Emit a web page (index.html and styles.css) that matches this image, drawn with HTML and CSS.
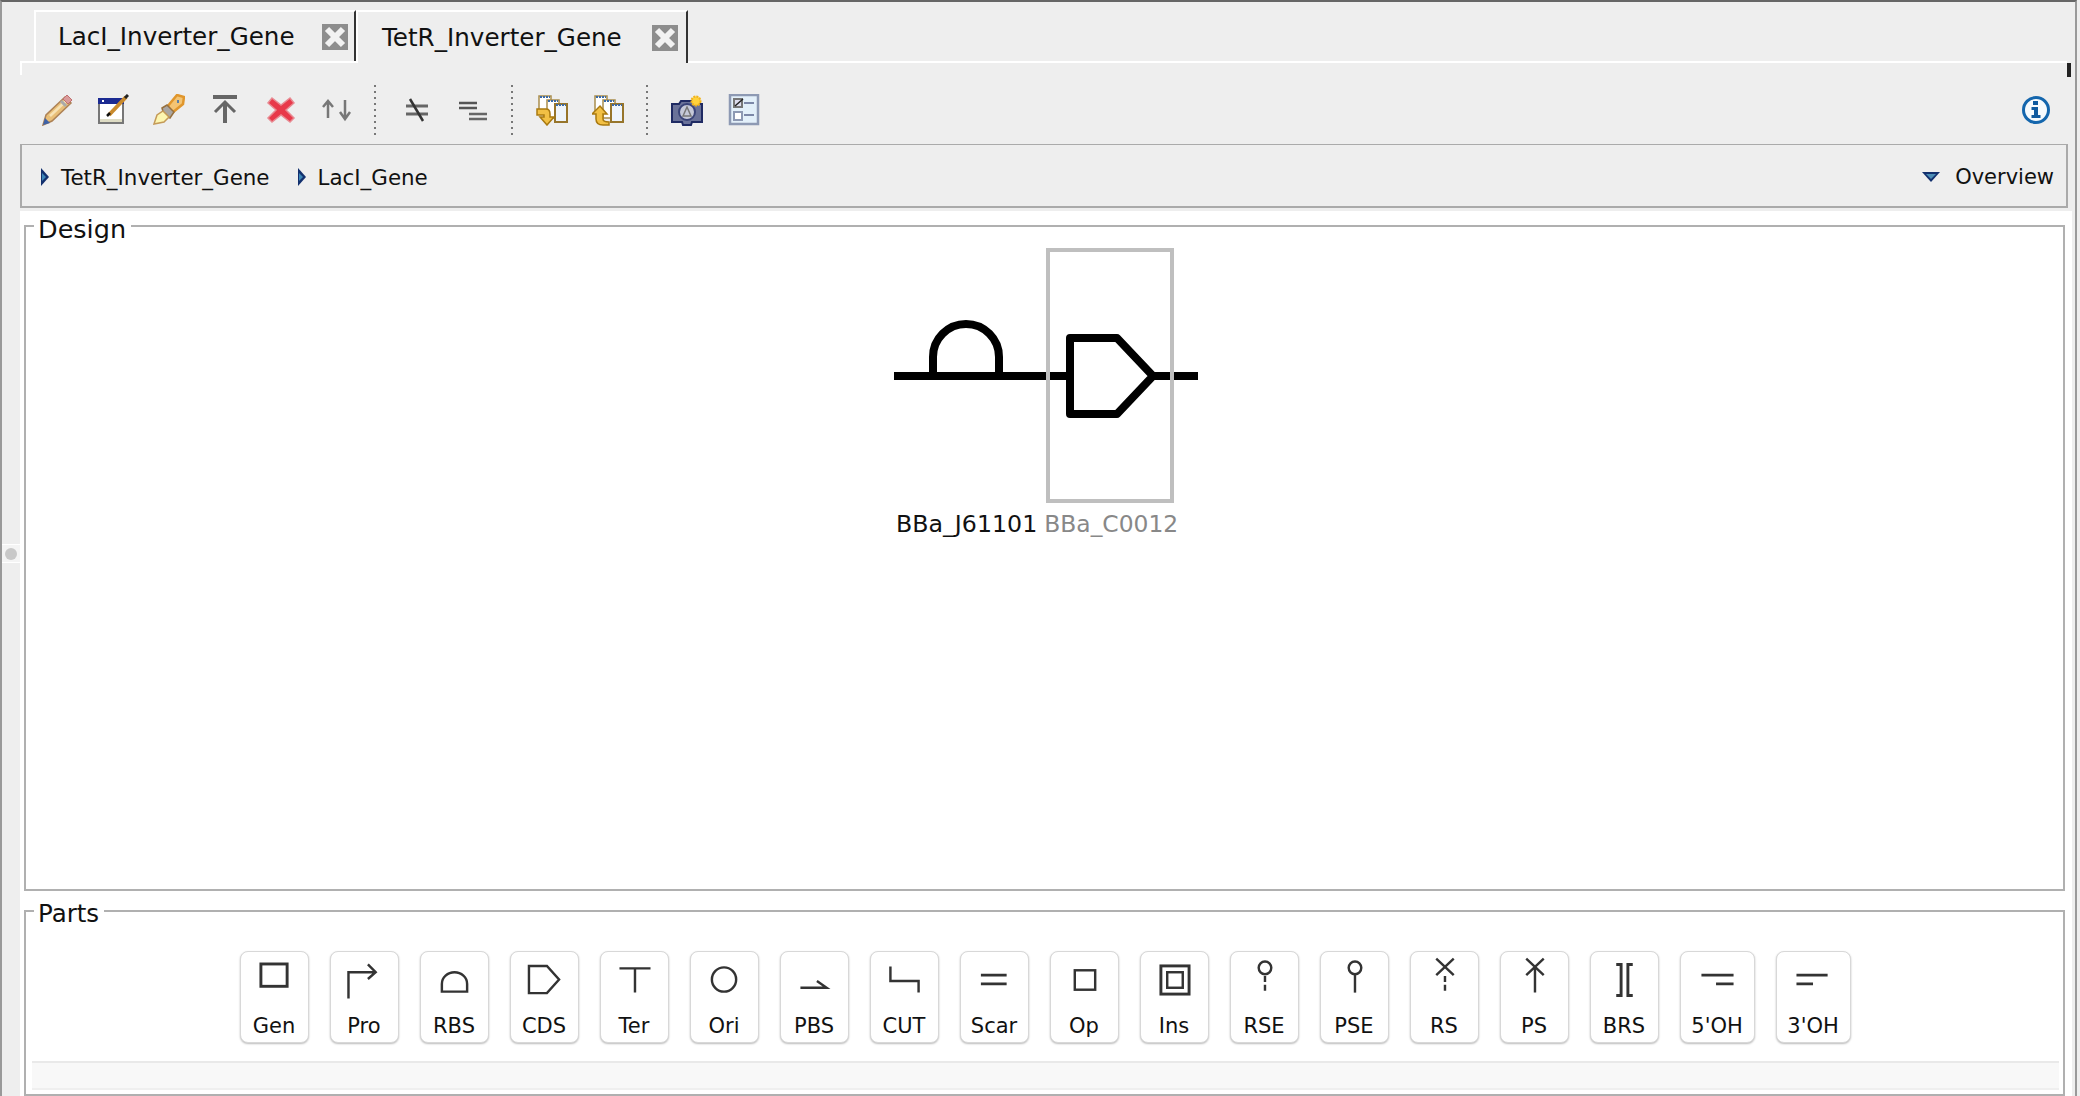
FILE: index.html
```html
<!DOCTYPE html>
<html lang="en">
<head>
  <title>TetR_Inverter_Gene</title>
  <link rel="stylesheet" href="styles.css">
</head>
<body>
  <div class="window">
    <div class="tabs">
      <div class="tab">
        <span class="tab-title">LacI_Inverter_Gene</span>
        <svg class="tab-close" viewBox="0 0 26 26"><rect width="26" height="26" fill="#8d8d8d"/><path d="M5 5L21 21M21 5L5 21" stroke="#f2f2f2" stroke-width="6"/></svg>
      </div>
      <div class="tab tab-active">
        <span class="tab-title">TetR_Inverter_Gene</span>
        <svg class="tab-close" viewBox="0 0 26 26"><rect width="26" height="26" fill="#8d8d8d"/><path d="M5 5L21 21M21 5L5 21" stroke="#f2f2f2" stroke-width="6"/></svg>
      </div>
    </div>

    <div class="editor">
      <div class="toolbar">
        <div class="tool-group">
          <svg class="tool" viewBox="0 0 32 32"><path d="M2 31L5 21L24 3L30 9L11 27Z" fill="#e9bf78" stroke="#ad8256" stroke-width="1.5"/><path d="M9 22L25 7" stroke="#f7e2b4" stroke-width="2.5"/><path d="M22 5L26 1L31 6L27 10Z" fill="#d99a9a" stroke="#c06f6f"/><path d="M20 7L25 12" stroke="#aaa" stroke-width="3"/><path d="M2 31L4 24L9 29Z" fill="#3f63a8"/></svg>
          <svg class="tool" viewBox="0 0 32 32"><rect x="2" y="5" width="24" height="24" fill="#fff" stroke="#777" stroke-width="2"/><rect x="1" y="4" width="26" height="6" fill="#1b2a92"/><rect x="5" y="6" width="2" height="2" fill="#fff"/><rect x="3" y="25" width="22" height="3" fill="#dedcc4"/><path d="M12 21L29 3" stroke="#c98a2c" stroke-width="4"/><path d="M10 22L13 19" stroke="#111" stroke-width="2.5"/><path d="M28 4L31 1" stroke="#222" stroke-width="3"/></svg>
          <svg class="tool" viewBox="0 0 32 32"><path d="M14 13L24 1L31 3L30 10L19 19Z" fill="#f3c474" stroke="#e0962c" stroke-width="2.5"/><path d="M9 14L14 11L21 18L17 24L11 21Z" fill="#aaa6a2" stroke="#96703f" stroke-width="1.5"/><path d="M1 30L4 21L10 17L16 23L11 28Z" fill="#fdf6b0" stroke="#c49a58" stroke-width="1.5"/><rect x="24" y="6" width="2" height="3" fill="#5a7fa5"/></svg>
          <svg class="tool" viewBox="0 0 32 32"><rect x="4" y="1" width="24" height="4" fill="#666"/><path d="M16 8V29" stroke="#666" stroke-width="4"/><path d="M6 18L16 8L26 18" fill="none" stroke="#666" stroke-width="3"/></svg>
          <svg class="tool" viewBox="0 0 32 32"><path d="M7 4L16 11L25 4L29 9L21 16L29 24L25 28L16 21L7 28L3 24L11 16L3 9Z" fill="#e8394a" stroke="#e88a92" stroke-width="1.5"/></svg>
          <svg class="tool" viewBox="0 0 32 32"><path d="M7 24V7M2 13L7 7L12 13" fill="none" stroke="#777" stroke-width="2.5"/><path d="M24 6V24M19 18L24 25L29 18" fill="none" stroke="#777" stroke-width="2.5"/></svg>
        </div>
        <div class="tool-sep tool-sep-first"></div>
        <div class="tool-group">
          <svg class="tool" viewBox="0 0 32 32"><path d="M5 12H27M5 20H27" stroke="#666" stroke-width="3"/><path d="M9 5L22 27" stroke="#333" stroke-width="2.5"/></svg>
          <svg class="tool" viewBox="0 0 32 32"><path d="M2 9H20M2 14H20" stroke="#555" stroke-width="2.5"/><path d="M12 20H30M12 25H30" stroke="#666" stroke-width="2.5"/></svg>
        </div>
        <div class="tool-sep tool-sep-second"></div>
        <div class="tool-group">
          <svg class="tool" viewBox="0 0 32 32"><rect x="3" y="2" width="12" height="16" fill="#fff" stroke="#a98d4c" stroke-width="1.5"/><rect x="11" y="6" width="12" height="18" fill="#fff" stroke="#a98d4c" stroke-width="1.5"/><rect x="19" y="10" width="12" height="18" fill="#eef4fb" stroke="#97752b" stroke-width="2"/><path d="M4 3H14M12 7H22M20 11H30" stroke="#3a6aa8" stroke-width="2" stroke-dasharray="2 1"/><path d="M1 15H10Q14 15 14 20V23H18L11 31L4 23H8V21H1Z" fill="#f2c044" stroke="#a9790f" stroke-width="1.5"/></svg>
          <svg class="tool" viewBox="0 0 32 32"><rect x="3" y="2" width="12" height="16" fill="#fff" stroke="#a98d4c" stroke-width="1.5"/><rect x="11" y="6" width="12" height="18" fill="#fff" stroke="#a98d4c" stroke-width="1.5"/><rect x="19" y="10" width="12" height="18" fill="#eef4fb" stroke="#97752b" stroke-width="2"/><path d="M4 3H14M12 7H22M20 11H30" stroke="#3a6aa8" stroke-width="2" stroke-dasharray="2 1"/><path d="M8 12L15 20H11V25Q11 28 17 28V31H11Q4 31 4 25V20H0Z" fill="#f2c044" stroke="#a9790f" stroke-width="1.5"/></svg>
        </div>
        <div class="tool-sep tool-sep-third"></div>
        <div class="tool-group tool-group-last">
          <svg class="tool" viewBox="0 0 32 32"><path d="M1 10H8L10 7H22L24 10H31V28H21L20 31H12L11 28H1Z" fill="#6a7299" stroke="#1f2a63" stroke-width="2"/><circle cx="16" cy="18" r="8" fill="#c5c9d8" stroke="#3a4478" stroke-width="2"/><path d="M12 22L16 13L20 22Z" fill="none" stroke="#777" stroke-width="1.5"/><circle cx="25" cy="7" r="4.5" fill="#ffd23c" stroke="#f1b31c" stroke-width="2" stroke-dasharray="2 1"/></svg>
          <svg class="tool" viewBox="0 0 32 32"><rect x="2" y="1" width="28" height="29" fill="#e3f0fa" stroke="#8d99b3" stroke-width="2.5"/><rect x="6" y="5" width="8" height="8" fill="#dde" stroke="#777" stroke-width="2"/><path d="M7 12L15 5" stroke="#222" stroke-width="1.5"/><rect x="6" y="18" width="8" height="8" fill="#fff" stroke="#8d99b3" stroke-width="2"/><path d="M16 9H26M16 21H26" stroke="#7c88a8" stroke-width="2"/></svg>
        </div>
        <svg class="tool tool-info" viewBox="0 0 30 30"><circle cx="15" cy="15" r="12.5" fill="#f6fafd" stroke="#1466ad" stroke-width="3"/><rect x="12" y="6" width="5" height="4" fill="#0f5aa0"/><path d="M10.5 12H17V20H19.5V23H10.5V20H13V15H10.5Z" fill="#0f5aa0"/></svg>
        <div class="toolbar-tick"></div>
      </div>

      <div class="crumbs">
        <span class="crumb"><svg class="crumb-arrow" viewBox="0 0 8 18"><path d="M0 0L8 9L0 18Z" fill="#12306e"/><path d="M1 5L5 9L1 13Z" fill="#3d86b8"/></svg>TetR_Inverter_Gene</span>
        <span class="crumb"><svg class="crumb-arrow" viewBox="0 0 8 18"><path d="M0 0L8 9L0 18Z" fill="#12306e"/><path d="M1 5L5 9L1 13Z" fill="#3d86b8"/></svg>LacI_Gene</span>
        <span class="overview"><svg class="overview-arrow" viewBox="0 0 18 10"><path d="M0 0H18L9 10Z" fill="#12306e"/><path d="M4 2H14L9 7Z" fill="#4c8db5"/></svg>Overview</span>
      </div>

      <div class="workspace">
        <fieldset class="group group-design">
          <legend>Design</legend>
          <div class="design-canvas">
            <div class="circuit">
              <svg class="circuit-glyphs" viewBox="0 0 304 255">
                <path d="M0 128H304" stroke="#000" stroke-width="8"/>
                <path d="M39 128V109A33 33 0 0 1 105 109V128Z" fill="#fff" stroke="#000" stroke-width="8" stroke-linejoin="round"/>
                <path d="M176 90H223L259 128L223 166H176Z" fill="#fff" stroke="#000" stroke-width="8" stroke-linejoin="round"/>
                <rect x="154" y="2" width="124" height="251" fill="none" stroke="#bfbfbf" stroke-width="4"/>
              </svg>
              <div class="circuit-labels">
                <span>BBa_J61101</span>
                <span class="label-selected">BBa_C0012</span>
              </div>
            </div>
          </div>
        </fieldset>

        <fieldset class="group group-parts">
          <legend>Parts</legend>
          <div class="palette">
            <button class="part"><svg viewBox="0 0 69 56"><rect x="20.5" y="11.5" width="27" height="23" fill="#fff" stroke="#333" stroke-width="3"/></svg><span>Gen</span></button>
            <button class="part"><svg viewBox="0 0 69 56"><path d="M18 47V20H46M38 12L46 20L38 27" fill="none" stroke="#333" stroke-width="2.5"/></svg><span>Pro</span></button>
            <button class="part"><svg viewBox="0 0 69 56"><path d="M21.5 40V32A13 12 0 0 1 47.5 32V40Z" fill="none" stroke="#333" stroke-width="2.5"/></svg><span>RBS</span></button>
            <button class="part"><svg viewBox="0 0 69 56"><path d="M18.5 13.5H37L49.5 27.5L37 41.5H18.5Z" fill="none" stroke="#333" stroke-width="2.5"/></svg><span>CDS</span></button>
            <button class="part"><svg viewBox="0 0 69 56"><path d="M19 16H51M35 16V41" fill="none" stroke="#333" stroke-width="2.5"/></svg><span>Ter</span></button>
            <button class="part"><svg viewBox="0 0 69 56"><circle cx="34" cy="27.5" r="12.5" fill="none" stroke="#333" stroke-width="2.5"/></svg><span>Ori</span></button>
            <button class="part"><svg viewBox="0 0 69 56"><path d="M20 36H47L37 29" fill="none" stroke="#333" stroke-width="2.5"/></svg><span>PBS</span></button>
            <button class="part"><svg viewBox="0 0 69 56"><path d="M20 14V29H49V41" fill="none" stroke="#333" stroke-width="2.5"/></svg><span>CUT</span></button>
            <button class="part"><svg viewBox="0 0 69 56"><path d="M20.5 23H47M20.5 32H47" fill="none" stroke="#333" stroke-width="3"/></svg><span>Scar</span></button>
            <button class="part"><svg viewBox="0 0 69 56"><rect x="24.5" y="18" width="21" height="20" fill="none" stroke="#333" stroke-width="2.5"/></svg><span>Op</span></button>
            <button class="part"><svg viewBox="0 0 69 56"><rect x="20.5" y="13.5" width="29" height="29" fill="none" stroke="#333" stroke-width="3"/><rect x="27" y="20" width="16" height="16" fill="none" stroke="#333" stroke-width="2.5"/></svg><span>Ins</span></button>
            <button class="part"><svg viewBox="0 0 69 56"><circle cx="35" cy="15.5" r="6.5" fill="none" stroke="#333" stroke-width="2.5"/><path d="M35 24V41" stroke="#333" stroke-width="2.5" stroke-dasharray="6 3"/></svg><span>RSE</span></button>
            <button class="part"><svg viewBox="0 0 69 56"><circle cx="35" cy="15.5" r="6.5" fill="none" stroke="#333" stroke-width="2.5"/><path d="M35 22V41" stroke="#333" stroke-width="2.5"/></svg><span>PSE</span></button>
            <button class="part"><svg viewBox="0 0 69 56"><path d="M26 6L44 23M44 6L26 23" stroke="#333" stroke-width="2.5"/><path d="M35 24V41" stroke="#333" stroke-width="2.5" stroke-dasharray="6 3"/></svg><span>RS</span></button>
            <button class="part"><svg viewBox="0 0 69 56"><path d="M26 6L44 23M44 6L26 23M35 14V41" fill="none" stroke="#333" stroke-width="2.5"/></svg><span>PS</span></button>
            <button class="part"><svg viewBox="0 0 69 56"><path d="M26 12H31V44H26M43 12H38V44H43" fill="none" stroke="#333" stroke-width="3"/></svg><span>BRS</span></button>
            <button class="part part-wide"><svg viewBox="0 0 75 56"><path d="M21 23H54M36 32H54" stroke="#333" stroke-width="3"/></svg><span>5'OH</span></button>
            <button class="part part-wide"><svg viewBox="0 0 75 56"><path d="M20 23H52M20 32H37" stroke="#333" stroke-width="3"/></svg><span>3'OH</span></button>
          </div>
          <div class="palette-scroll"></div>
        </fieldset>
      </div>
    </div>

    <div class="splitter"></div>
  </div>
</body>
</html>
```

FILE: styles.css
```css
html, body {
  margin: 0;
  padding: 0;
  height: 100%;
  overflow: hidden;
  background: #eeeeee;
}

.window {
  position: relative;
  display: flex;
  flex-direction: column;
  box-sizing: border-box;
  width: 2077px;
  height: 1096px;
  background: #eeeeee;
  border-top: 2px solid #666666;
  border-left: 2px solid #999999;
  border-right: 2px solid #999999;
  font-family: "DejaVu Sans", sans-serif;
  color: #111111;
}

/* tabs */
.tabs {
  display: flex;
  height: 51px;
  margin-top: 8px;
  padding-left: 32px;
}

.tab {
  display: flex;
  align-items: center;
  box-sizing: border-box;
  width: 322px;
  height: 51px;
  padding-left: 22px;
  border-top: 2px solid #ffffff;
  border-left: 2px solid #ffffff;
  border-right: 2px solid #333333;
  font-size: 24.6px;
  position: relative;
  z-index: 1;
}

.tab-active {
  width: 332px;
  height: 53px;
  background: #eeeeee;
  padding-left: 24px;
}

.tab-title {
  flex: 1;
  white-space: nowrap;
}

.tab-close {
  width: 26px;
  height: 26px;
  margin-right: 6px;
}

.tab-active .tab-close {
  margin-right: 8px;
}

.editor {
  flex: 1;
  display: flex;
  flex-direction: column;
  margin: 0 3px 0 18px;
  min-height: 0;
}

/* toolbar */
.toolbar {
  position: relative;
  display: flex;
  align-items: center;
  box-sizing: border-box;
  height: 83px;
  margin-right: 5px;
  padding: 13px 0 0 21px;
  border-top: 2px solid #ffffff;
}

.toolbar::before {
  content: "";
  position: absolute;
  left: 0;
  top: 0;
  width: 2px;
  height: 12px;
  background: #ffffff;
}

.toolbar-tick {
  position: absolute;
  right: -4px;
  top: 0;
  width: 4px;
  height: 14px;
  background: #222222;
}

.tool-group {
  display: flex;
  gap: 24px;
}

.tool-group-last {
  gap: 25px;
}

.tool {
  display: block;
  width: 32px;
  height: 32px;
}

.tool-sep {
  width: 2px;
  height: 50px;
  margin: 0 22px;
  background: repeating-linear-gradient(#777777 0 2px, transparent 2px 6px);
}

.tool-sep-first {
  margin-left: 21px;
  margin-right: 25px;
}

.tool-sep-second {
  margin-left: 22px;
  margin-right: 23px;
}

.tool-sep-third {
  margin-right: 23px;
}

.tool-info {
  width: 30px;
  height: 30px;
  margin-left: auto;
  margin-right: 16px;
}

/* breadcrumb */
.crumbs {
  display: flex;
  align-items: center;
  box-sizing: border-box;
  height: 64px;
  margin-right: 4px;
  padding: 3px 12px 0 19px;
  border: 2px solid #aaaaaa;
  border-top-width: 1px;
  font-size: 21.4px;
}

.crumb {
  display: flex;
  align-items: center;
  margin-right: 28px;
}

.crumb-arrow {
  width: 8px;
  height: 18px;
  margin-right: 12px;
}

.overview {
  display: flex;
  align-items: center;
  margin-left: auto;
  font-size: 21px;
}

.overview-arrow {
  width: 18px;
  height: 10px;
  margin-right: 15px;
}

/* design and parts groups */
.workspace {
  flex: 1;
  display: flex;
  flex-direction: column;
  min-height: 0;
  margin-top: 3px;
  padding: 0 7px 0 4px;
  background: #ffffff;
}

.group {
  min-width: 0;
  margin: 0;
  padding: 0;
  border: 2px solid #b0b0b0;
}

.group legend {
  position: relative;
  top: 3px;
  margin-left: 8px;
  padding: 0 5px 0 4px;
  font-size: 25.5px;
  line-height: 30px;
}

.group-parts legend {
  font-size: 24.5px;
}

.group-design {
  height: 680px;
  box-sizing: border-box;
}

.group-parts {
  flex: 1;
  margin-top: 5px;
  box-sizing: border-box;
}

.design-canvas {
  display: flex;
  justify-content: center;
  padding: 7px 0 0 3px;
}

.circuit {
  width: 304px;
}

.circuit-glyphs {
  display: block;
  width: 304px;
  height: 255px;
}

.circuit-labels {
  display: flex;
  gap: 7px;
  padding: 7px 0 0 2px;
  font-size: 23.7px;
  line-height: 28px;
  white-space: nowrap;
}

.label-selected {
  color: #888888;
  font-size: 23.4px;
}

.palette {
  display: flex;
  justify-content: center;
  gap: 21px;
  padding: 25px 0 0 1px;
}

.part {
  display: flex;
  flex-direction: column;
  align-items: center;
  box-sizing: border-box;
  width: 69px;
  height: 92px;
  padding: 0;
  background: #ffffff;
  border: 1px solid #d8d8d8;
  border-radius: 8px;
  box-shadow: 0 1px 2px #bbbbbb;
  font-family: inherit;
  font-size: 21px;
  color: #111111;
}

.part-wide {
  width: 75px;
}

.part svg {
  display: block;
  width: 100%;
  height: 56px;
  flex: none;
}

.part span {
  margin-top: 5px;
  line-height: 26px;
  white-space: nowrap;
}

.palette-scroll {
  height: 29px;
  margin: 18px 4px 0 6px;
  box-sizing: border-box;
  background: #f8f8f8;
  border-top: 2px solid #e9e9e9;
  border-bottom: 2px solid #efefef;
}

/* split pane handle on the left margin */
.splitter {
  position: absolute;
  left: 0;
  top: 542px;
  width: 18px;
  height: 19px;
  box-sizing: border-box;
  background: #f4f4f4;
  border-top: 1px solid #ffffff;
  border-bottom: 1px solid #ffffff;
}

.splitter::after {
  content: "";
  position: absolute;
  left: 3px;
  top: 3px;
  width: 12px;
  height: 12px;
  border-radius: 50%;
  background: #c8c8c8;
}
```
